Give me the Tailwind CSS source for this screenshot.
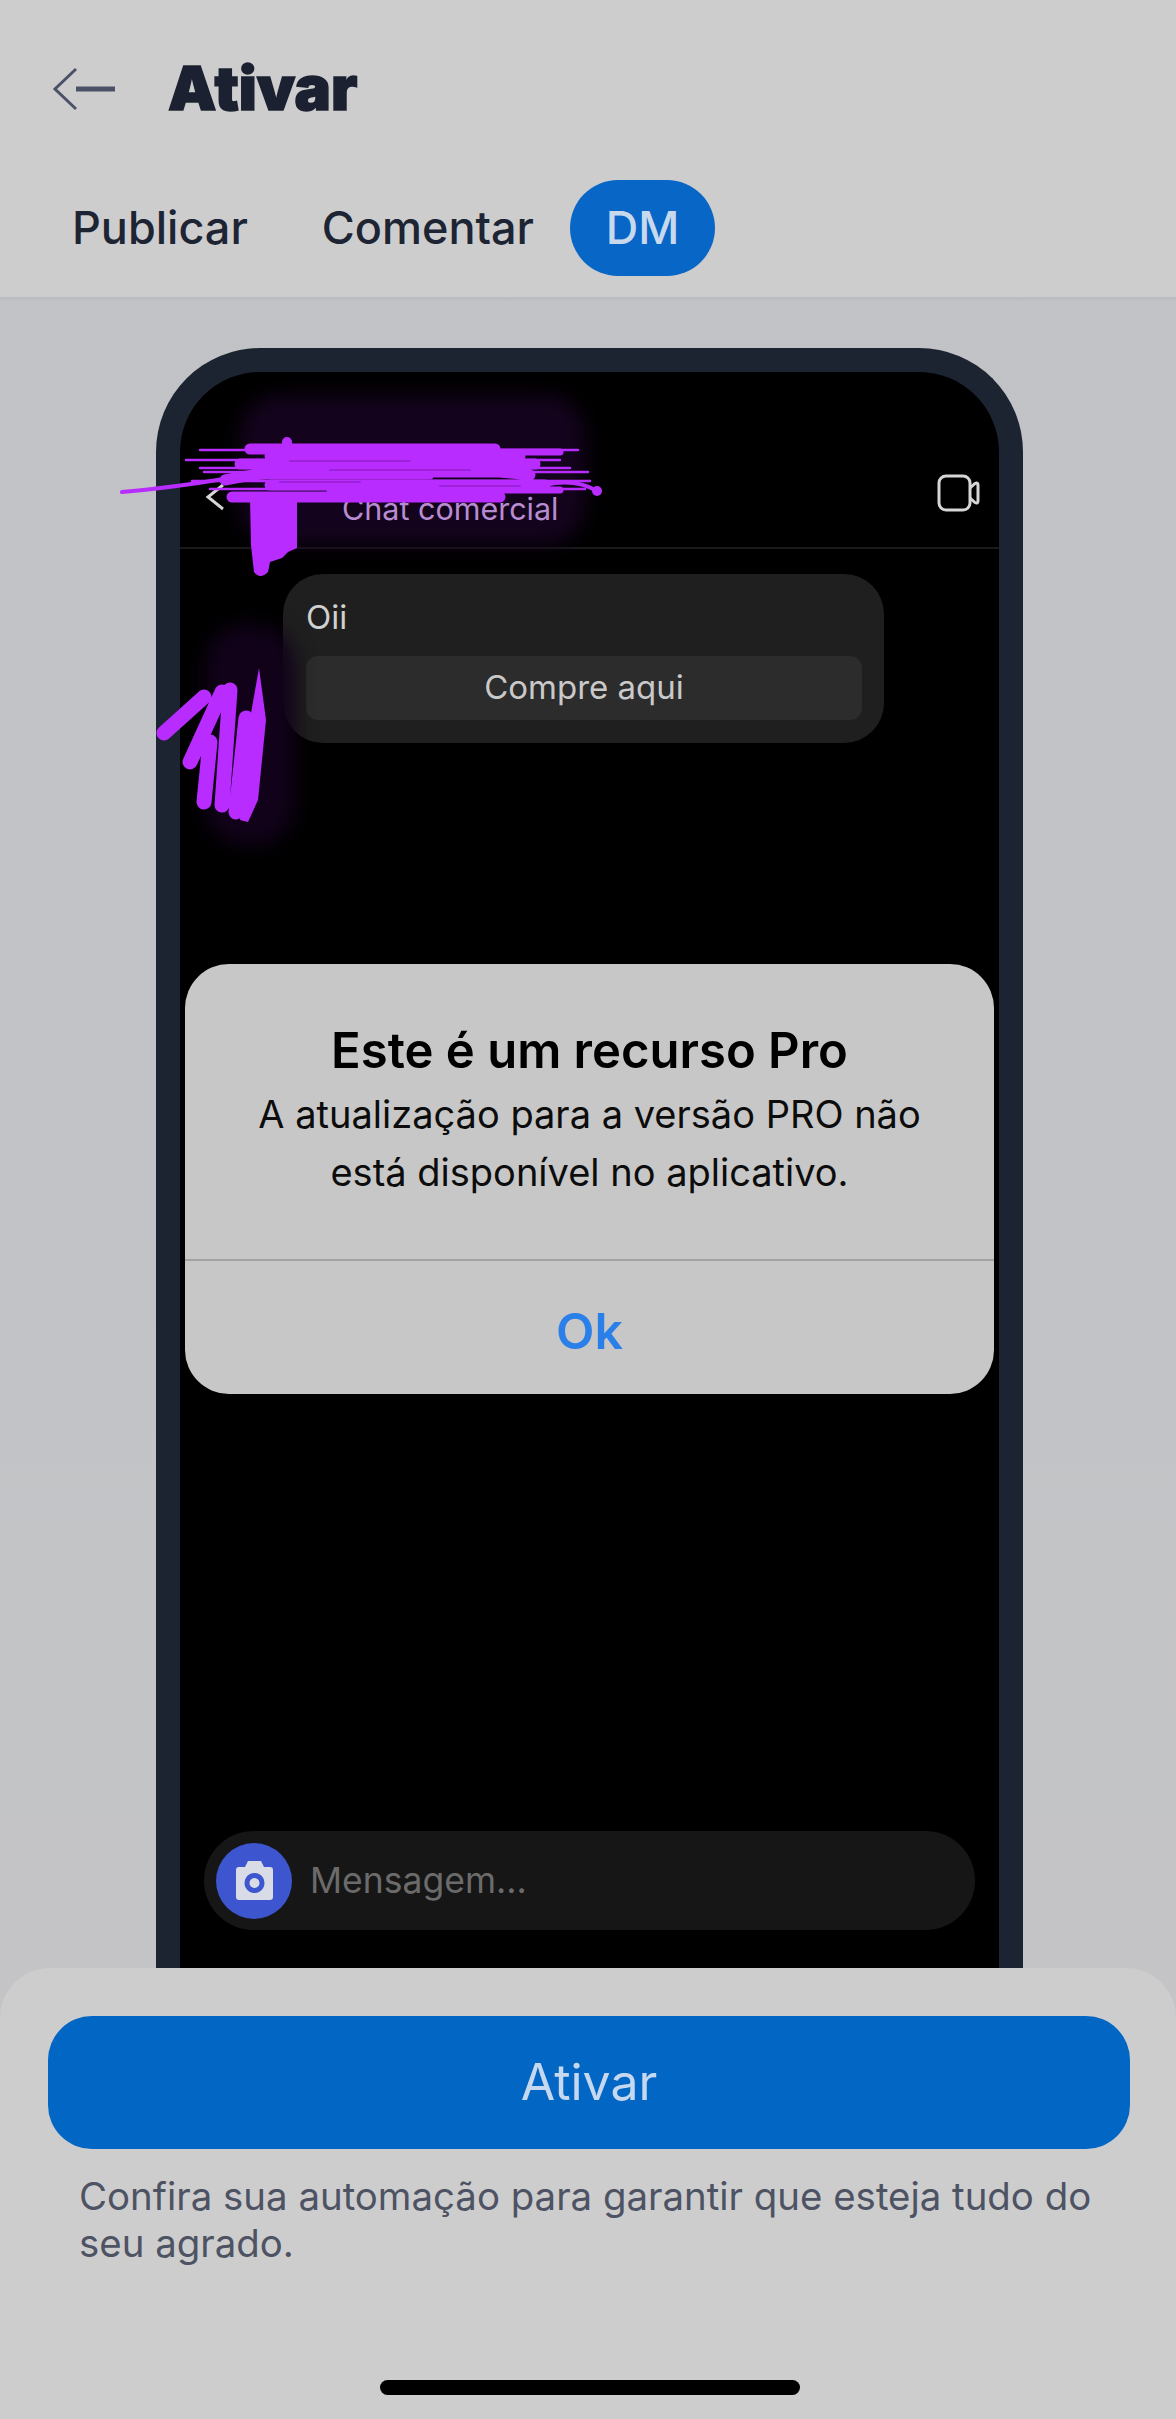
<!DOCTYPE html>
<html lang="pt">

<head>
    <meta charset="UTF-8">
    <meta name="viewport" content="width=device-width, initial-scale=1.0">
    <title>Ativar</title>
    <script src="https://cdn.jsdelivr.net/npm/@tailwindcss/browser@4"></script>
</head>

<body class="[font-family:Inter,sans-serif]">
    <div class="relative w-[1176px] h-[2419px] overflow-hidden flex flex-col bg-gradient-to-b from-[#c0c2c6] to-[#c5c5c7]">

        <!-- header -->
        <div class="h-[300px] shrink-0 bg-[#cdcdce] border-b-[3px] border-[#bcbdc1]">
            <div class="flex items-center pl-[52px] pt-[26px] h-[150px]">
                <svg width="66" height="44" viewBox="0 0 66 44" fill="none" stroke="#4b5268" class="shrink-0 mt-[2px]">
                    <path d="M24 2 L3 22 L24 42" stroke-width="3" />
                    <path d="M24 22 H63" stroke-width="5" />
                </svg>
                <h1 class="ml-[50px] text-[61px] leading-none font-black text-[#1b2130] [-webkit-text-stroke:1.5px_#1b2130]">Ativar</h1>
            </div>
            <div class="flex items-center pl-[72px] mt-[30px]">
                <span class="text-[45px] font-medium text-[#1d2433]">Publicar</span>
                <span class="ml-[74px] text-[45px] font-medium text-[#1d2433]">Comentar</span>
                <span class="ml-[36px] w-[145px] h-[96px] rounded-[48px] bg-[#0866c6] text-[#c8d9ee] text-[45px] font-medium flex items-center justify-center">DM</span>
            </div>
        </div>

        <!-- phone -->
        <div class="ml-[156px] mt-[48px] w-[867px] h-[1700px] shrink-0 border-[24px] border-b-0 border-[#1c2431] rounded-t-[104px] bg-black flex flex-col">
            <div class="h-[177px] shrink-0 border-b-2 border-[#1a1a1a] flex justify-between px-[24px] pt-[110px]">
                <div class="flex">
                    <svg width="22" height="28" viewBox="0 0 22 28" fill="none" stroke="#d8d8d8" stroke-width="3" class="mt-[1px]">
                        <path d="M19 2 L4 14 L19 26" />
                    </svg>
                    <span class="ml-[116px] mt-[9px] text-[30.500px] leading-[36px] text-[#b88cd0] relative z-20">Chat comercial</span>
                </div>
                <svg width="44" height="38" viewBox="0 0 44 38" fill="none" stroke="#d6d6d6" stroke-width="3" class="mt-[-8px] mr-[-6px]">
                    <rect x="2" y="2" width="31" height="34" rx="7" />
                    <path d="M33 14 L38 9.500 Q41 8 41 11 V27 Q41 30 38 28.500 L33 24" />
                </svg>
            </div>

            <div class="ml-[103px] mt-[25px] w-[601px] h-[169px] rounded-[40px] bg-[#1f1f1f] px-[23px] pt-[24px] shrink-0">
                <p class="text-[33px] leading-[38px] text-[#d0d0d0]">Oii</p>
                <div class="mt-[20px] h-[64px] w-[556px] rounded-[12px] bg-[#2c2c2c] text-[#c9c9c9] text-[33px] flex items-center justify-center">Compre aqui</div>
            </div>

            <div class="ml-[24px] mt-[1088px] w-[771px] h-[99px] rounded-full bg-[#161616] flex items-center pl-[12px] shrink-0">
                <div class="w-[76px] h-[76px] rounded-full bg-[#3d55cf] flex items-center justify-center">
                    <svg width="39" height="41" viewBox="0 0 39 41">
                        <path fill="#d9dbe6" fill-rule="evenodd" d="M13 1 h13 l3 6 h6 a3 3 0 0 1 3 3 v27 a3 3 0 0 1 -3 3 H4 a3 3 0 0 1 -3 -3 V10 a3 3 0 0 1 3 -3 h6 Z M19.500 13 a10 10 0 1 0 0.010 0 Z M19.500 18 a5 5 0 1 1 -0.010 0 Z" />
                    </svg>
                </div>
                <span class="ml-[18px] text-[35.500px] text-[#6b6b6b]">Mensagem...</span>
            </div>
        </div>

        <!-- censura por cima do chat -->
        <div class="absolute z-10 left-[240px] top-[395px] w-[345px] h-[150px] rounded-[40px] bg-[#14031d] blur-[10px]"></div>
        <div class="absolute z-10 left-[205px] top-[625px] w-[90px] h-[220px] rounded-[40px] bg-[#11021a] blur-[10px]"></div>
        <svg class="absolute z-30 left-0 top-0" width="1176" height="900" viewBox="0 0 1176 900" fill="none" stroke="#b92cff" stroke-linecap="round">
            <path stroke-width="2.500" d="M200 450 H578 M186 460 H560 M204 472 H588 M192 481 H590 M210 489 H585 M200 468 H570" />
            <path stroke-width="11" d="M250 449 H495 M270 456 H520 M240 464 H535 M262 472 H510 M225 480 Q350 455 530 475 M270 485 H545 M232 497 H500" />
            <path stroke-width="7" d="M300 452 H560 M240 476 H430 M330 490 H560" />
            <path stroke="#9d22da" stroke-width="2" d="M290 461 H410 M330 470 H470 M280 482 H360 M440 486 H520" />
            <path stroke-width="4" d="M122 492 Q170 488 230 478 M545 485 Q575 478 597 491" />
            <circle cx="597" cy="491" r="5" fill="#b92cff" stroke="none" />
            <path stroke-width="10" d="M287 442 V450" />
            <path fill="#b92cff" stroke="none" d="M250 498 H297 V548 L288 552 L282 558 L270 562 L268 572 Q260 580 254 572 L251 545 Z" />
            <path stroke-width="15" d="M204 697 L164 733 M222 692 L190 762 M210 742 L204 802 M230 690 L222 805 M246 718 L236 812" />
            <path fill="#b92cff" stroke="none" d="M259 668 L266 720 L258 800 L248 822 L240 820 L248 730 Z" />
        </svg>

        <!-- alerta -->
        <div class="absolute z-40 left-[185px] top-[964px] w-[809px] h-[430px] rounded-[44px] bg-[#c7c7c7] flex flex-col text-center">
            <div class="h-[297px] border-b-2 border-[#a2a2a2] pt-[59px]">
                <p class="text-[49px] leading-[56px] font-semibold text-black">Este é um recurso Pro</p>
                <p class="mt-[6px] text-[38px] leading-[58px] text-[#0c0c0c]">A atualização para a versão PRO não<br>está disponível no aplicativo.</p>
            </div>
            <div class="flex-1 flex items-center justify-center pt-[8px] text-[50px] font-semibold text-[#2a7fe8]">Ok</div>
        </div>

        <!-- painel inferior -->
        <div class="absolute z-40 left-0 bottom-0 w-full h-[451px] rounded-t-[50px] bg-[#cdcdce] pl-[48px] pr-[46px] pt-[48px]">
            <div class="h-[133px] rounded-[44px] bg-[#0266c4] flex items-center justify-center text-[50px] text-[#c5d8ef]">Ativar</div>
            <p class="mt-[24px] pl-[31px] pr-[20px] text-[38.400px] leading-[47px] text-[#4e5364]">Confira sua automação para garantir que esteja tudo do seu agrado.</p>
        </div>
        <div class="absolute z-40 left-[380px] top-[2380px] w-[420px] h-[15px] rounded-full bg-black"></div>
    </div>
</body>

</html>
